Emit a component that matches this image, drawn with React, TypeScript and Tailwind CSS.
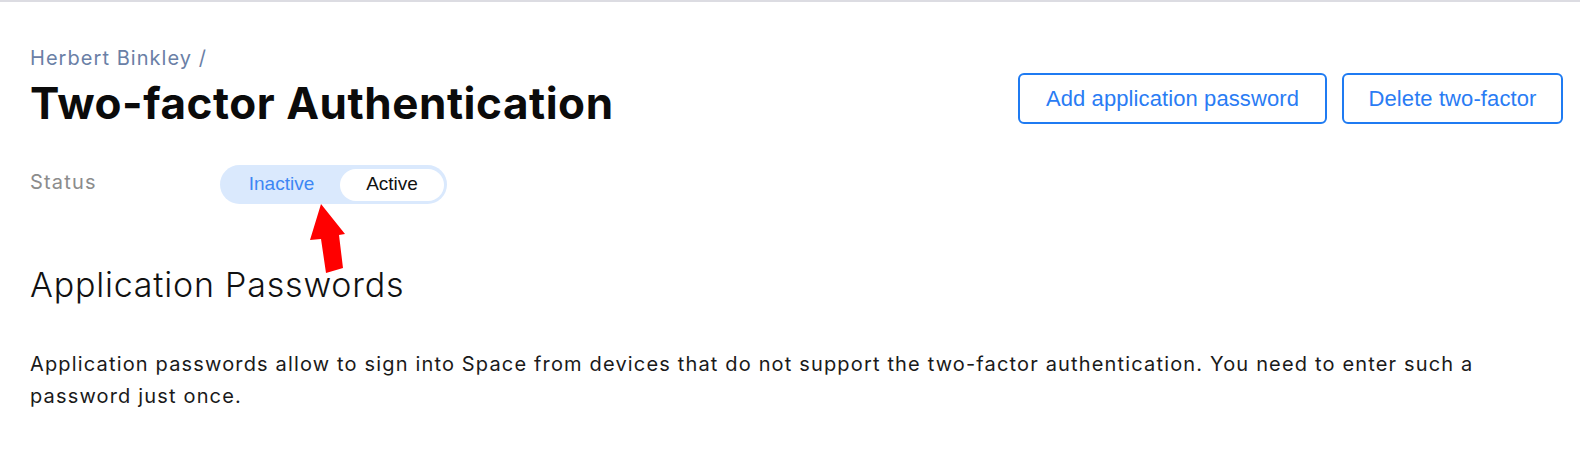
import React from "react";

export default function App() {
  return (
    <div className="relative min-h-screen bg-white border-t-2 border-[#dcdce2] font-['Inter','Noto_Sans',sans-serif]">
      <div className="pl-[30px] pr-[17px]">
        <div className="flex items-start justify-between">
          <div className="pt-[42px]">
            <div className="text-[20px] leading-[28px] tracking-[1.05px] text-[#6a80a6]">Herbert Binkley /</div>
            <h1 className="mt-[5px] text-[44px] leading-[52px] font-bold tracking-[0.55px] text-[#0b0b0b]">
              Two-factor Authentication
            </h1>
          </div>
          <div className="flex gap-[15px] pt-[71px] font-['Liberation_Sans',Arial,sans-serif]">
            <button className="h-[51px] w-[309px] rounded-[6px] border-2 border-[#1f7bf2] bg-white text-[22px] tracking-[0.1px] text-[#2a7cf4]">
              Add application password
            </button>
            <button className="h-[51px] w-[221px] rounded-[6px] border-2 border-[#1f7bf2] bg-white text-[22px] tracking-[0.1px] text-[#2a7cf4]">
              Delete two-factor
            </button>
          </div>
        </div>

        <div className="mt-[36px] flex items-start">
          <div className="mt-[3px] w-[190px] text-[20px] leading-[28px] tracking-[1.2px] text-[#8c8c8c]">Status</div>
          <div className="flex h-[39px] w-[227px] items-center rounded-full bg-[#dae9fd] pr-[3px] font-['Liberation_Sans',Arial,sans-serif] text-[19px]">
            <div className="flex-1 text-center text-[#3d86f4] pl-[3px]">Inactive</div>
            <div className="flex h-[32px] w-[104px] items-center justify-center rounded-full bg-white text-[#111]">
              Active
            </div>
          </div>
        </div>

        <h2 className="mt-[61px] text-[34px] leading-[40px] font-light tracking-[0.8px] text-[#111]">
          Application Passwords
        </h2>

        <p className="mt-[43px] text-[20px] leading-[32px] tracking-[1.16px] text-[#1a1a1a]">
          Application passwords allow to sign into Space from devices that do not support the two-factor
          authentication. You need to enter such a password just once.
        </p>
      </div>

      <svg
        className="pointer-events-none absolute left-[300px] top-[195px]"
        width="60"
        height="85"
        viewBox="0 0 60 85"
      >
        <polygon points="21,7 45,37 39,38 43,71 26,76 21,42 10,43" fill="#ff0000" />
      </svg>
    </div>
  );
}
